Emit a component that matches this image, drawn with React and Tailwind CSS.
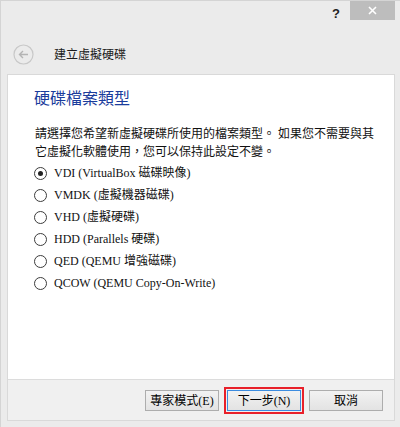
const FONT = { fontFamily: '"Liberation Serif", "Noto Sans CJK TC", serif' };

const OPTIONS = [
  'VDI (VirtualBox 磁碟映像)',
  'VMDK (虛擬機器磁碟)',
  'VHD (虛擬硬碟)',
  'HDD (Parallels 硬碟)',
  'QED (QEMU 增強磁碟)',
  'QCOW (QEMU Copy-On-Write)'
];

function Radio({ checked }) {
  return (
    <span className="w-[13px] h-[13px] rounded-full border border-[#3c3c3c] bg-white flex items-center justify-center shrink-0">
      {checked && <span className="w-[5px] h-[5px] rounded-full bg-[#222]" />}
    </span>
  );
}

function Btn({ children, focused }) {
  return (
    <button
      className={
        'w-[74px] h-[21px] text-[12px] text-black bg-gradient-to-b from-[#f2f2f2] to-[#e3e3e3] border ' +
        (focused ? 'border-[#3c8ce0] outline-2 outline-[#e8202a] outline-offset-1' : 'border-[#adadad]')
      }
      style={FONT}
    >
      {children}
    </button>
  );
}

export default function App() {
  return (
    <div className="w-[400px] h-[427px] bg-[#ebebeb] border-l border-t border-[#d4d4d4] flex flex-col text-black" style={FONT}>
      {/* title bar */}
      <div className="h-[21px] flex justify-end items-start">
        <span className="mt-[3px] mr-[10px] text-[13px] font-bold text-[#222] font-['Liberation_Sans']">?</span>
        <div className="w-[45px] h-[19px] bg-[#bdbdbd] mr-[5px] flex items-center justify-center">
          <svg width="9" height="9" viewBox="0 0 9 9">
            <path d="M1 1L8 8M8 1L1 8" stroke="#fff" strokeWidth="1.6" />
          </svg>
        </div>
      </div>

      {/* header */}
      <div className="h-[52px] flex items-start pt-[22px] pl-[12px]">
        <svg width="21" height="21" viewBox="0 0 21 21">
          <circle cx="10.5" cy="10.5" r="9.5" fill="none" stroke="#c8c8c8" strokeWidth="1.2" />
          <path d="M15 10.5H6.5M10 7L6.5 10.5L10 14" fill="none" stroke="#b4b4b4" strokeWidth="1.4" />
        </svg>
        <span className="ml-[20px] mt-[2px] text-[12px] leading-[18px] text-[#1a1a1a]">建立虛擬硬碟</span>
      </div>

      {/* panel */}
      <div className="ml-[6px] w-[388px] flex-1 mb-[6px] border border-[#d9d9d9] flex flex-col">
        <div className="bg-white h-[304px] pl-[26px] pr-[12px] pt-[14px]">
          <h2 className="text-[16px] leading-[20px] text-[#1a3c9c] font-normal">硬碟檔案類型</h2>
          <p className="mt-[16px] ml-[1px] text-[12px] leading-[18px] text-[#111]">
            請選擇您希望新虛擬硬碟所使用的檔案類型。 如果您不需要與其它虛擬化軟體使用，您可以保持此設定不變。
          </p>
          <div className="mt-[1px] flex flex-col">
            {OPTIONS.map((o, i) => (
              <label key={o} className="h-[22px] flex items-center gap-[7px] text-[12px] text-[#111]">
                <Radio checked={i === 0} />
                <span>{o}</span>
              </label>
            ))}
          </div>
        </div>
        <div className="flex-1 bg-[#f0f0f0] border-t border-[#dcdcdc] flex justify-end items-start gap-[8px] pt-[10px] pr-[11px]">
          <Btn>專家模式(E)</Btn>
          <Btn focused>下一步(N)</Btn>
          <Btn>取消</Btn>
        </div>
      </div>
    </div>
  );
}
